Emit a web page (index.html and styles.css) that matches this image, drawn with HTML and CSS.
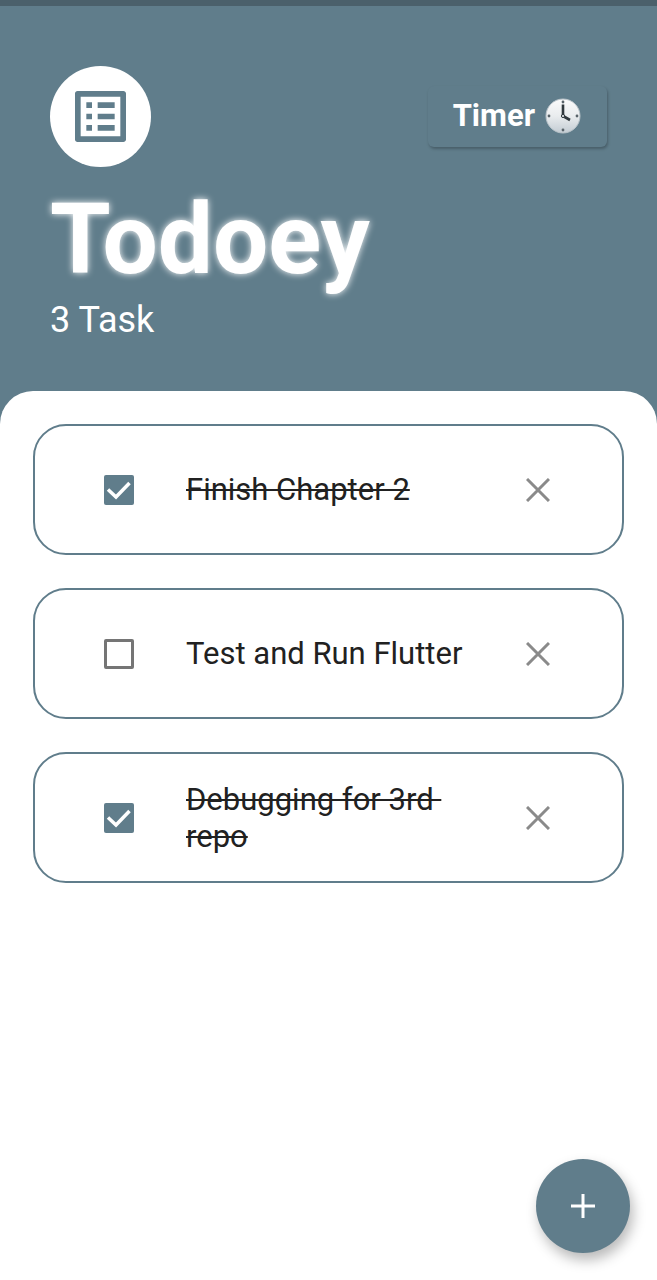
FILE: index.html
```html
<!DOCTYPE html>
<html lang="en">
<head>
  <meta charset="utf-8">
  <meta name="viewport" content="width=device-width, initial-scale=1">
  <title>Todoey</title>
  <link rel="stylesheet" href="styles.css">
</head>
<body>
  <div class="app">
    <header class="header">
      <div class="header-bar">
        <div class="logo">
          <svg class="logo-icon" viewBox="3 3 18 18" aria-hidden="true">
            <path d="M11 7h6v2h-6zm0 4h6v2h-6zm0 4h6v2h-6zM7 7h2v2H7zm0 4h2v2H7zm0 4h2v2H7zM20.100 3H3.900c-.5 0-.9.4-.9.900v16.200c0 .4.400.9.900.900h16.200c.4 0 .9-.5.900-.900V3.900c0-.5-.5-.9-.9-.900zM19 19H5V5h14z"/>
          </svg>
        </div>
        <button class="timer" type="button">
          <span>Timer</span>
          <svg class="clock" viewBox="0 0 36 36" aria-hidden="true">
            <defs>
              <linearGradient id="face" x1="0" y1="0" x2="0" y2="1">
                <stop offset="0" stop-color="#fbfbfb"/>
                <stop offset="0.5" stop-color="#e9ecee"/>
                <stop offset="1" stop-color="#c3ccd3"/>
              </linearGradient>
            </defs>
            <circle cx="18" cy="18" r="17" fill="url(#face)" stroke="#b9c3c9" stroke-width="1"/>
            <g fill="#59636a">
              <circle cx="18" cy="4" r="1.400"/>
              <circle cx="32" cy="18" r="1.400"/>
              <circle cx="18" cy="32" r="1.400"/>
              <circle cx="4" cy="18" r="1.400"/>
            </g>
            <path d="M18 17V6.500M18 18l7 4" fill="none" stroke="#30383d" stroke-width="2.600"/>
            <circle cx="18" cy="18" r="1.600" fill="#dce0e3" stroke="#30383d" stroke-width="1"/>
          </svg>
        </button>
      </div>
      <h1 class="title">Todoey</h1>
      <p class="count">3 Task</p>
    </header>
    <main class="panel">
      <ul class="tasks">
        <li class="task">
          <span class="check-area"><input class="check" type="checkbox" id="task-1" checked></span>
          <label class="name" for="task-1">Finish Chapter 2</label>
          <button class="remove" type="button" aria-label="Remove Finish Chapter 2">
            <svg class="remove-icon" viewBox="0 0 24 24" aria-hidden="true"><path d="M1 1l22 22M23 1L1 23"/></svg>
          </button>
        </li>
        <li class="task">
          <span class="check-area"><input class="check" type="checkbox" id="task-2"></span>
          <label class="name" for="task-2">Test and Run Flutter</label>
          <button class="remove" type="button" aria-label="Remove Test and Run Flutter">
            <svg class="remove-icon" viewBox="0 0 24 24" aria-hidden="true"><path d="M1 1l22 22M23 1L1 23"/></svg>
          </button>
        </li>
        <li class="task">
          <span class="check-area"><input class="check" type="checkbox" id="task-3" checked></span>
          <label class="name" for="task-3">Debugging for 3rd repo</label>
          <button class="remove" type="button" aria-label="Remove Debugging for 3rd repo">
            <svg class="remove-icon" viewBox="0 0 24 24" aria-hidden="true"><path d="M1 1l22 22M23 1L1 23"/></svg>
          </button>
        </li>
      </ul>
    </main>
    <button class="add" type="button" aria-label="Add task">
      <svg class="add-icon" viewBox="0 0 24 24" aria-hidden="true"><path d="M12 0v24M0 12h24"/></svg>
    </button>
  </div>
</body>
</html>
```
FILE: styles.css
```css
:root {
  --slate: #607d8b;
  --ink: #212121;
}

* {
  box-sizing: border-box;
}

body {
  margin: 0;
  font-family: Roboto, "Liberation Sans", sans-serif;
  background: var(--slate);
}

button {
  padding: 0;
  border: 0;
  background: none;
  font: inherit;
  color: inherit;
  cursor: pointer;
}

.app {
  display: flex;
  flex-direction: column;
  min-height: 100vh;
  border-top: 6px solid #4b606b;
}

.header {
  padding: 60px 50px 50px;
  color: #fff;
}

.header-bar {
  display: flex;
  align-items: center;
  justify-content: space-between;
}

.logo {
  display: grid;
  place-items: center;
  width: 101px;
  height: 101px;
  border-radius: 50%;
  background: #fff;
}

.logo-icon {
  width: 51px;
  height: 51px;
  fill: var(--slate);
}

.timer {
  display: flex;
  align-items: center;
  gap: 10px;
  height: 61px;
  padding: 0 26px 2px 25px;
  border-radius: 6px;
  background: var(--slate);
  box-shadow: 1px 2px 3px rgba(0, 0, 0, 0.25);
  font-size: 31px;
  font-weight: 700;
}

.clock {
  width: 36px;
  height: 36px;
}

.title {
  margin: 14px 0 0;
  font-size: 98px;
  font-weight: 700;
  line-height: 117px;
  text-shadow: 0 0 7px #fff;
}

.count {
  margin: 2px 0 0;
  font-size: 36px;
  line-height: 41px;
}

.panel {
  flex: 1;
  padding: 33px;
  border-radius: 33px 33px 0 0;
  background: #fff;
}

.tasks {
  display: flex;
  flex-direction: column;
  gap: 33px;
  margin: 0;
  padding: 0;
  list-style: none;
}

.task {
  display: flex;
  align-items: center;
  min-height: 131px;
  padding: 0 44px;
  border: 2px solid var(--slate);
  border-radius: 33px;
}

.check-area,
.remove {
  display: grid;
  flex: none;
  place-items: center;
  width: 80px;
  height: 80px;
}

.check {
  appearance: none;
  width: 30px;
  height: 30px;
  margin: 0;
  border: 3px solid #757575;
  border-radius: 2px;
}

.check:checked {
  border: 0;
  background: var(--slate) url("data:image/svg+xml,%3Csvg xmlns='http://www.w3.org/2000/svg' viewBox='0 0 30 30'%3E%3Cpath d='M4 14.500l8 7.500L25.500 8' fill='none' stroke='white' stroke-width='3.500'/%3E%3C/svg%3E") center / 100%;
}

.name {
  flex: 1;
  margin: 0 27px;
  font-size: 31px;
  line-height: 37px;
  white-space: break-spaces;
  color: var(--ink);
}

.check-area:has(:checked) + .name {
  text-decoration: line-through 2px;
}

.remove-icon {
  width: 24px;
  height: 24px;
  fill: none;
  stroke: #8a8a8a;
  stroke-width: 3;
}

.add {
  position: fixed;
  right: 27px;
  bottom: 27px;
  display: grid;
  place-items: center;
  width: 94px;
  height: 94px;
  border-radius: 50%;
  background: var(--slate);
  box-shadow: 3px 7px 13px rgba(0, 0, 0, 0.28);
}

.add-icon {
  width: 24px;
  height: 24px;
  fill: none;
  stroke: #fff;
  stroke-width: 3;
}
```
